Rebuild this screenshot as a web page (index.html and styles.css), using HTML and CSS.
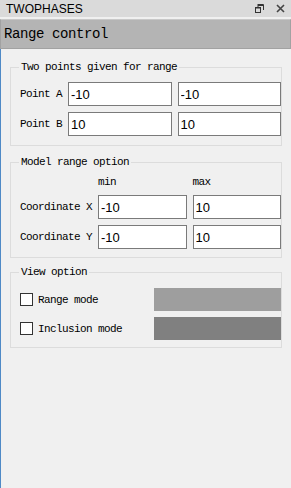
FILE: index.html
```html
<!DOCTYPE html>
<html lang="en">
<head>
  <meta charset="UTF-8">
  <meta name="viewport" content="width=device-width, initial-scale=1.0">
  <title>TWOPHASES - Range control</title>
  <link rel="stylesheet" href="styles.css">
</head>
<body>

<div class="titlebar">
  <span class="title">TWOPHASES</span>
  <svg class="tb-icon" width="9" height="9" viewBox="0 0 9 9">
    <path d="M3 .5h5.5v5.5M3 0v3M3 1.5h5" fill="none" stroke="#333" stroke-width="1"/>
    <rect x=".5" y="3.5" width="5" height="5" fill="none" stroke="#333"/>
    <path d="M0 4h6" stroke="#333" stroke-width="1"/>
  </svg>
  <svg class="tb-icon" width="9" height="9" viewBox="0 0 9 9">
    <path d="M1 1l7 7M8 1l-7 7" stroke="#444" stroke-width="1.6"/>
  </svg>
</div>

<div class="header">Range control</div>

<div class="panel">

  <fieldset class="group">
    <legend>Two points given for range</legend>
    <div class="grid points">
      <label for="ax">Point A</label>
      <input type="text" id="ax" value="-10">
      <input type="text" id="ay" value="-10">
      <label for="bx">Point B</label>
      <input type="text" id="bx" value="10">
      <input type="text" id="by" value="10">
    </div>
  </fieldset>

  <fieldset class="group model">
    <legend>Model range option</legend>
    <div class="grid coords">
      <span></span>
      <span class="colhead">min</span>
      <span class="colhead">max</span>
      <label for="xmin">Coordinate X</label>
      <input type="text" id="xmin" value="-10">
      <input type="text" id="xmax" value="10">
      <label for="ymin">Coordinate Y</label>
      <input type="text" id="ymin" value="-10">
      <input type="text" id="ymax" value="10">
    </div>
  </fieldset>

  <fieldset class="group view">
    <legend>View option</legend>
    <div class="grid modes">
      <label class="check"><input type="checkbox"> Range mode</label>
      <div class="swatch range"></div>
      <label class="check"><input type="checkbox"> Inclusion mode</label>
      <div class="swatch inclusion"></div>
    </div>
  </fieldset>

</div>

</body>
</html>
```

FILE: styles.css
```css
html, body {
  margin: 0;
  height: 100%;
}
body {
  background: #f0f0f0;
  font-family: "Liberation Mono", monospace;
  color: #000;
  display: flex;
  flex-direction: column;
}

.titlebar {
  height: 17px;
  background: #dadada;
  display: flex;
  align-items: center;
  padding: 0 6px;
  gap: 12px;
}
.title {
  font-family: "Liberation Sans", Arial, sans-serif;
  font-size: 12px;
  flex: 1;
}

.header {
  margin-top: 2px;
  height: 28px;
  line-height: 28px;
  background: #b4b4b4;
  border: 1px solid #a2a2a2;
  border-top-color: #c8c8c8;
  padding-left: 3px;
  font-size: 14px;
  letter-spacing: -0.4px;
}

.panel {
  flex: 1;
  border-left: 1px solid #4f89c6;
  padding: 0 9px 0 9px;
}

.group {
  margin: 0;
  border: 1px solid #dcdcdc;
  padding: 8px 0 9px 9px;
  min-width: 0;
}
.group legend {
  padding: 0 2px;
  margin-left: -1px;
  line-height: 14px;
  height: 14px;
}
.group, .group label, .colhead {
  font-size: 11px;
  letter-spacing: -0.6px;
}
.group:first-child { margin-top: 11px; }
.model { margin-top: 9px; padding-top: 6px; padding-bottom: 8px; }
.view { margin-top: 7px; padding-top: 9px; padding-bottom: 7px; }

.grid {
  display: grid;
  align-items: center;
}
.points {
  grid-template-columns: 42px 1fr 1fr;
  grid-auto-rows: 24px;
  gap: 6px;
}
.coords {
  grid-template-columns: 72px 1fr 1fr;
  grid-template-rows: 14px 24px 24px;
  gap: 6px;
}
.modes {
  grid-template-columns: 1fr 127px;
  grid-auto-rows: 23px;
  gap: 6px 0;
}

input[type=text] {
  box-sizing: border-box;
  width: 100%;
  height: 100%;
  margin: 0;
  border: 1px solid #7a7a7a;
  background: #fff;
  padding: 0 2px;
  font-family: "Liberation Sans", Arial, sans-serif;
  font-size: 13px;
  letter-spacing: 0;
  outline: none;
}

.check {
  display: flex;
  align-items: center;
  gap: 5px;
}
.check input {
  appearance: none;
  -webkit-appearance: none;
  width: 13px;
  height: 13px;
  margin: 0;
  border: 1px solid #333;
  background: #fff;
}

.swatch { height: 100%; }
.range { background: #9e9e9e; }
.inclusion { background: #808080; }
```
